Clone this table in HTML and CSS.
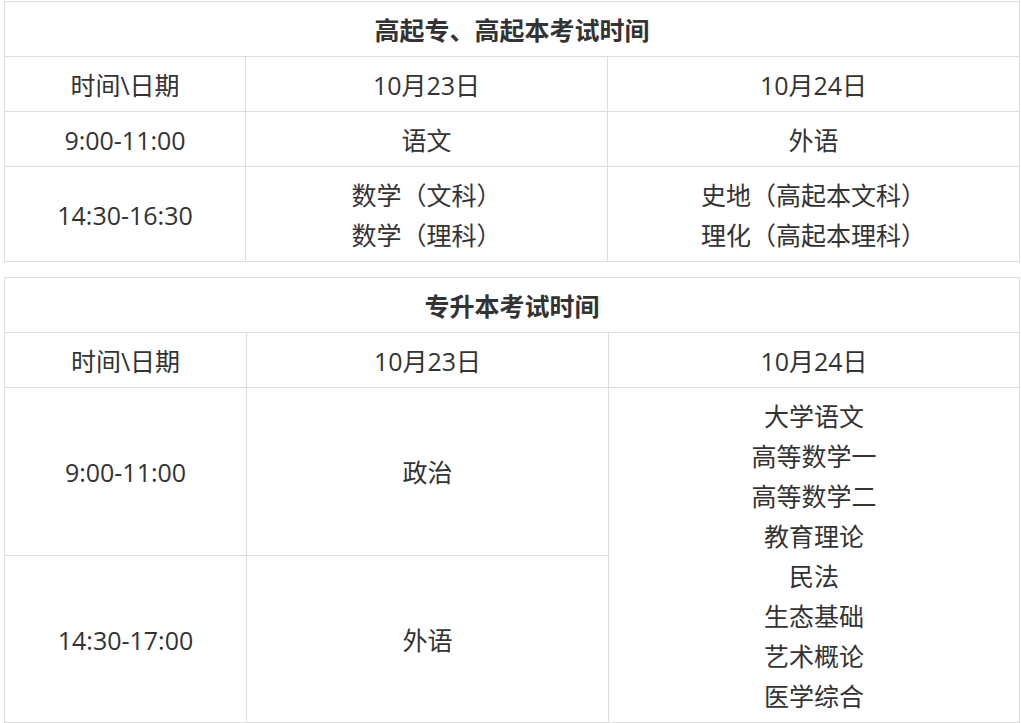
FILE: index.html
```html
<!DOCTYPE html>
<html lang="zh-CN">
<head>
<meta charset="utf-8">
<title>考试时间</title>
<link rel="stylesheet" href="styles.css">
</head>
<body>
<div class="page">
  <table class="exam">
    <colgroup><col class="c1"><col class="c2"><col class="c3"></colgroup>
    <tr><th colspan="3">高起专、高起本考试时间</th></tr>
    <tr><td>时间\日期</td><td>10月23日</td><td>10月24日</td></tr>
    <tr><td>9:00-11:00</td><td>语文</td><td>外语</td></tr>
    <tr><td>14:30-16:30</td><td>数学（文科）<br>数学（理科）</td><td>史地（高起本文科）<br>理化（高起本理科）</td></tr>
  </table>
  <table class="exam second">
    <colgroup><col class="c1b"><col class="c2"><col class="c3b"></colgroup>
    <tr><th colspan="3">专升本考试时间</th></tr>
    <tr><td>时间\日期</td><td>10月23日</td><td>10月24日</td></tr>
    <tr><td>9:00-11:00</td><td>政治</td><td rowspan="2">大学语文<br>高等数学一<br>高等数学二<br>教育理论<br>民法<br>生态基础<br>艺术概论<br>医学综合</td></tr>
    <tr><td>14:30-17:00</td><td>外语</td></tr>
  </table>
</div>
</body>
</html>
```

FILE: styles.css
```css
html, body {
  margin: 0;
  padding: 0;
  background: #fff;
}
.page {
  padding: 1px 3px 0 4px;
  display: flex;
  flex-direction: column;
  gap: 15px;
}
.exam {
  border-collapse: collapse;
  table-layout: fixed;
  width: 1015px;
  font-family: "Open Sans", "Noto Sans CJK SC", sans-serif;
  font-size: 25px;
  color: #333;
}
.c1 { width: 241px; }
.c2 { width: 362px; }
.c3 { width: 412px; }
.c1b { width: 242px; }
.c3b { width: 411px; }
.exam th, .exam td {
  border: 1px solid #dddddd;
  padding: 8px 4px 6px;
  line-height: 40px;
  text-align: center;
  vertical-align: middle;
}
.exam th {
  font-family: "Noto Sans CJK SC", sans-serif;
  font-size: 25px;
  font-weight: bold;
  padding: 7px 4px 7px;
}
```
